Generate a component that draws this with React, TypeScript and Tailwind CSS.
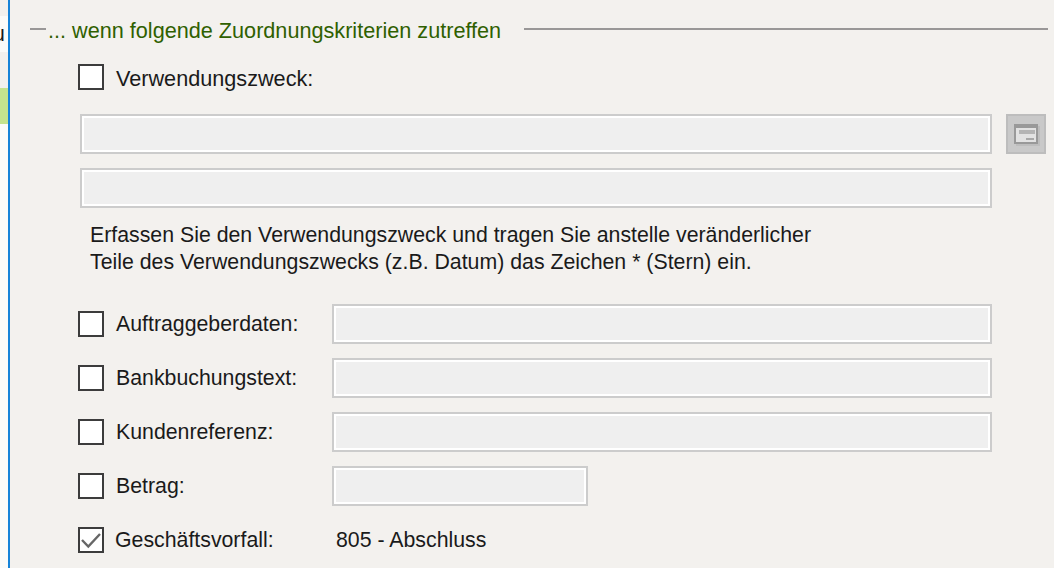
import React from 'react';

const fieldClass = 'h-10 border-2 border-[#cccccc] bg-[#efefef] shadow-[inset_0_0_0_2px_#ffffff]';

const Box = ({ checked = false }: { checked?: boolean }) => (
  <div className="w-[26px] h-[26px] shrink-0 border-2 border-[#3c3c3c] bg-white flex items-center justify-center">
    {checked && (
      <svg width="22" height="22" viewBox="0 0 22 22" fill="none">
        <path d="M2 11 L8.3 17.5 L20 5" stroke="#666666" strokeWidth="2.4" />
      </svg>
    )}
  </div>
);

const Row = ({ label, wide = true }: { label: string; wide?: boolean }) => (
  <div className="flex items-center h-10">
    <Box />
    <span className="ml-3 w-[216px] shrink-0 text-[#1a1a1a]">{label}</span>
    <div className={`${fieldClass} ${wide ? 'w-[660px]' : 'w-[256px]'}`} />
  </div>
);

export default function App() {
  return (
    <div className="w-[1054px] h-[568px] flex overflow-hidden bg-[#f3f1ee] text-[21.3px] leading-[27px] font-['Liberation_Sans',sans-serif]">
      {/* cut off list on the left */}
      <div className="w-2 shrink-0 flex flex-col bg-[#f3f1ee]">
        <div className="h-4" />
        <div className="h-9 bg-[#fbfbf9] flex items-center overflow-hidden text-[#1a1a1a]">
          <span className="-ml-[7px]">u</span>
        </div>
        <div className="h-9" />
        <div className="h-9 bg-[#c5e48e]" />
        <div className="flex-1 bg-[#fbfbf9]" />
      </div>
      <div className="w-[2px] shrink-0 bg-[#1683d8]" />

      <div className="flex-1 min-w-0 flex flex-col">
        {/* group title */}
        <div className="flex items-center h-[28px] mt-4 pl-5 pr-[6px]">
          <div className="w-4 h-[2px] mb-[2px] bg-[#999797]" />
          <span className="ml-[2px] text-[21.65px] text-[#2f6000] whitespace-nowrap">... wenn folgende Zuordnungskriterien zutreffen</span>
          <div className="ml-[23px] flex-1 h-[2px] mb-[2px] bg-[#999797]" />
        </div>

        <div className="pl-[68px] flex flex-col">
          <div className="flex items-center mt-[18px] h-[30px]">
            <Box />
            <span className="ml-3 mt-[3px] text-[21.65px] text-[#1a1a1a]">Verwendungszweck:</span>
          </div>

          <div className="flex items-center mt-[22px] pl-[2px]">
            <div className={`${fieldClass} w-[912px]`} />
            <div className="ml-[14px] w-10 h-10 border-2 border-[#bdbdbd] bg-[#c9c9c9] flex items-center justify-center">
              <svg width="26" height="22" viewBox="0 0 26 22" className="ml-[2px] mt-[2px]">
                <rect x="2" y="2" width="24" height="20" fill="#bdbdbd" />
                <rect x="0" y="0" width="24" height="20" fill="#999999" />
                <rect x="2" y="4" width="20" height="14" fill="#e2e2e2" />
                <rect x="5" y="6" width="16" height="4" fill="#b4b4b4" />
                <rect x="12" y="14" width="8" height="2" fill="#a8a8a8" />
              </svg>
            </div>
          </div>

          <div className={`${fieldClass} w-[912px] mt-[14px] ml-[2px]`} />

          <p className="mt-[14px] ml-[12px] text-[#1a1a1a] whitespace-nowrap">
            Erfassen Sie den Verwendungszweck und tragen Sie anstelle veränderlicher
            <br />
            Teile des Verwendungszwecks (z.B. Datum) das Zeichen * (Stern) ein.
          </p>

          <div className="mt-[28px] flex flex-col gap-[14px]">
            <Row label="Auftraggeberdaten:" />
            <Row label="Bankbuchungstext:" />
            <Row label="Kundenreferenz:" />
            <Row label="Betrag:" wide={false} />
          </div>

          <div className="flex items-center mt-[14px] h-[40px]">
            <Box checked />
            <span className="ml-[11px] w-[221px] shrink-0 text-[#1a1a1a]">Geschäftsvorfall:</span>
            <span className="text-[#1a1a1a]">805 - Abschluss</span>
          </div>
        </div>
      </div>
    </div>
  );
}
